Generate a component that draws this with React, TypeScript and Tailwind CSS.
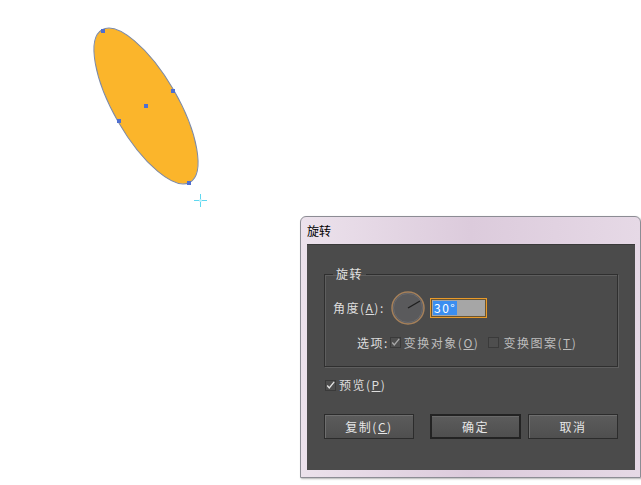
import React from 'react';

const font = { fontFamily: '"Noto Sans CJK SC", "Liberation Sans", sans-serif' };

const Check: React.FC<{ checked: boolean; dim?: boolean }> = ({ checked, dim }) => (
  <span className="inline-flex w-[11px] h-[11px] items-center justify-center border border-[#3a3a3a] bg-[#4e4e4e]">
    {checked && (
      <svg width="11" height="11" viewBox="0 0 11 11">
        <path d="M1.5 5.5 L4 8.5 L10 1" fill="none" stroke={dim ? '#a8a8a8' : '#e4e4e4'} strokeWidth="1.6" />
      </svg>
    )}
  </span>
);

const Button: React.FC<{ label: React.ReactNode; primary?: boolean }> = ({ label, primary }) => (
  <button
    className={`w-full h-[25px] flex items-center justify-center text-[12px] tracking-[1.5px] text-[#e6e6e6] bg-gradient-to-b from-[#5c5c5c] to-[#4f4f4f] ${
      primary
        ? 'border-2 border-[#232323] shadow-[inset_0_1px_0_#6a6a6a]'
        : 'border border-[#2c2c2c] shadow-[inset_1px_1px_0_#6e6e6e]'
    }`}
  >
    {label}
  </button>
);

const App: React.FC = () => {
  return (
    <div className="relative w-[641px] h-[485px] bg-white overflow-hidden" style={font}>
      {/* canvas artwork */}
      <svg className="absolute left-0 top-0" width="260" height="220" viewBox="0 0 260 220">
        <ellipse
          cx="146"
          cy="106"
          rx="32"
          ry="88"
          transform="rotate(-30 146 106)"
          fill="#fbb52b"
          stroke="#7c8aa8"
          strokeWidth="1"
        />
        {[
          [103, 31],
          [173, 91],
          [119, 121],
          [189, 183],
          [146, 106],
        ].map(([x, y]) => (
          <rect key={`${x}-${y}`} x={x - 2} y={y - 2} width="4" height="4" fill="#4f6fd0" />
        ))}
        <g stroke="#5fd8f0" strokeWidth="1">
          <line x1="194" y1="200.5" x2="207" y2="200.5" />
          <line x1="200.5" y1="194" x2="200.5" y2="207" />
        </g>
        <circle cx="200.5" cy="200.5" r="1.5" fill="#bff0fa" />
      </svg>

      {/* dialog */}
      <div className="ml-[300px] mt-[216px] w-[341px] h-[262px] flex flex-col border border-[#8c8c94] rounded-t-[6px] bg-gradient-to-r from-[#ece2ec] via-[#dccbdc] to-[#e6d9e6] shadow-[1px_1px_2px_rgba(0,0,0,0.3)]">
        <div className="h-[27px] flex items-center pl-[6px] text-[12px] text-black">旋转</div>
        <div className="ml-[6px] mr-[5px] mb-[7px] flex-1 bg-[#4b4b4b] border-t border-[#3a3a3a] flex flex-col pl-[17px] pr-[17px] pt-[21px] text-[12px] tracking-[1.5px] text-[#dedede]">
          <fieldset className="h-[101px] border border-[#2f2f2f] shadow-[inset_1px_1px_0_#5e5e5e,1px_1px_0_#5e5e5e] px-[8px]">
            <legend className="px-[3px] leading-[16px] text-[#e2e2e2]">旋转</legend>
            <div className="flex items-center mt-[8px]">
              <span className="w-[56px] whitespace-nowrap">
                角度(<span className="underline">A</span>):
              </span>
              <svg width="36" height="36" viewBox="0 0 36 36" className="ml-[1px]">
                <circle cx="18" cy="18" r="16" fill="#5a5a5c" stroke="#a5805a" strokeWidth="1.5" />
                <circle cx="18" cy="18" r="14.5" fill="none" stroke="#6a6a6e" strokeWidth="1" />
                <line x1="18" y1="18" x2="30" y2="11" stroke="#1f1f1f" strokeWidth="1.4" />
              </svg>
              <div className="ml-[4px] w-[57px] h-[20px] border border-[#e89a2a] bg-[#a6a6a6] shadow-[inset_0_0_0_1px_#6b5530] flex items-center pl-[2px]">
                <span className="bg-[#3b8ef0] text-white px-[1px] leading-[14px]">30°</span>
              </div>
            </div>
            <div className="flex items-center mt-[8px] ml-[24px] text-[#bdbdbd] whitespace-nowrap">
              <span className="text-[#dedede]">选项:</span>
              <span className="ml-[1px]">
                <Check checked dim />
              </span>
              <span className="ml-[3px]">
                变换对象(<span className="underline">O</span>)
              </span>
              <span className="ml-[9px]">
                <Check checked={false} />
              </span>
              <span className="ml-[4px]">
                变换图案(<span className="underline">T</span>)
              </span>
            </div>
          </fieldset>
          <div className="flex items-center mt-[9px] ml-[1px]">
            <Check checked />
            <span className="ml-[3px]">
              预览(<span className="underline">P</span>)
            </span>
          </div>
          <div className="flex mt-[20px]">
            <div className="w-[90px]">
              <Button
                label={
                  <>
                    复制(<span className="underline">C</span>)
                  </>
                }
              />
            </div>
            <div className="w-[91px] ml-[16px]">
              <Button label="确定" primary />
            </div>
            <div className="w-[90px] ml-[7px]">
              <Button label="取消" />
            </div>
          </div>
        </div>
      </div>
    </div>
  );
};

export default App;
